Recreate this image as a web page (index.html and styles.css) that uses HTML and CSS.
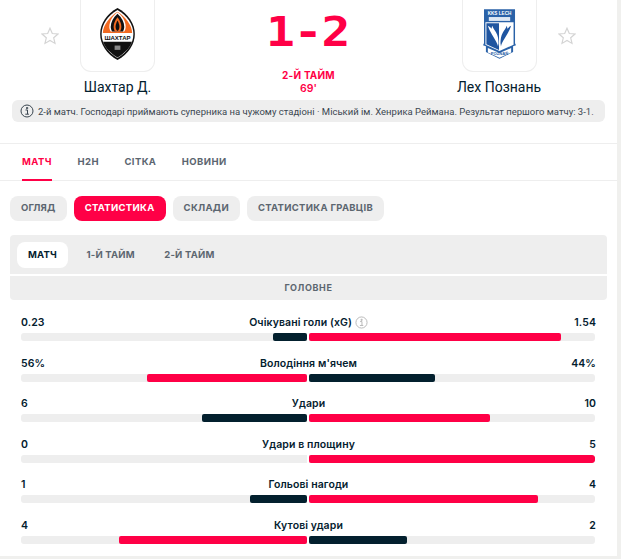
FILE: index.html
```html
<!DOCTYPE html>
<html lang="uk">
<head>
<meta charset="utf-8">
<title>Шахтар Д. - Лех Познань</title>
<link rel="stylesheet" href="styles.css">
</head>
<body>
<main class="panel">
  <header class="match">
    <div class="side side-home">
      <svg class="star" viewBox="0 0 18 18"><path d="M9 1.200l2.300 5.300 5.700.5-4.300 3.800 1.300 5.600L9 13.500l-5 2.900 1.300-5.600L1 7l5.700-.5z"/></svg>
      <div class="team">
        <div class="logo">
          <svg class="crest" viewBox="0 0 36 54">
            <path d="M18 0C7 6 0 16 0 27s7 21 18 27c11-6 18-16 18-27S29 6 18 0z" fill="#111"/>
            <path d="M18 2C8 8 1.500 17 1.500 27s6.500 19 16.500 25c10-6 16.500-15 16.500-25S28 8 18 2z" fill="#fff"/>
            <path d="M18 4C9.500 9.500 3 18 2.800 26h30.400C33 18 26.500 9.500 18 4z" fill="#f26a21"/>
            <path d="M18 4.500c-5.500 4-8.500 10-8.500 15 0 2 .5 3.500 1.500 5h14c1-1.500 1.500-3 1.500-5 0-5-3-11-8.500-15z" fill="#fff"/>
            <path d="M18 6c-4.500 4-7 9-7 13.500 0 2 .5 3.500 1.500 5h11c1-1.500 1.500-3 1.500-5C25 15 22.500 10 18 6z" fill="#111"/>
            <path d="M18 9.500c-2.500 3-4 6.500-4 10 0 2 .5 3.500 1.500 5h5c1-1.500 1.500-3 1.500-5 0-3.500-1.500-7-4-10z" fill="#f26a21"/>
            <path d="M18 13c-1.200 2-2 4.500-2 6.500 0 2 .7 3.500 2 4.500 1.300-1 2-2.500 2-4.500 0-2-.8-4.500-2-6.500z" fill="#111"/>
            <path d="M3 26.500h30v8H3z" fill="#fff"/>
            <path d="M3 35h30c-2 6.500-8 12-15 16.500C11 47 5 41.500 3 35z" fill="#111"/>
            <rect x="15" y="39" width="6" height="4.500" fill="#888"/>
            <text class="crest-text" x="18" y="33.300" text-anchor="middle">ШАХТАР</text>
          </svg>
        </div>
        <div class="team-name">Шахтар Д.</div>
      </div>
    </div>
    <div class="score-box">
      <div class="score">1-2</div>
      <div class="period">2-Й ТАЙМ</div>
      <div class="minute">69'</div>
    </div>
    <div class="side side-away">
      <div class="team">
        <div class="logo">
          <svg class="shield" viewBox="0 0 34 52">
            <path d="M1 0h32v35l1 2-3 1v6l-14 7-14-7v-6l-3-1 1-2z" fill="#2a62a8"/>
            <path d="M2.500 13.500h29v23L17 43 2.500 36.500z" fill="#fff"/>
            <path d="M3.500 14.500h13V42L3.500 36z" fill="#1f55a0"/>
            <rect x="6" y="8" width="22" height="4" fill="#dfe8f3"/>
            <path d="M15.500 38C14 32 8 26 5 17c2 1 3 2 4 3 0-1 0-2 .5-3 1 3 3 5 4 7 2 3 2.500 8 2.500 11z" fill="#fff"/>
            <path d="M18.500 38c1.500-6 7.500-12 10.500-21-2 1-3 2-4 3 0-1 0-2-.5-3-1 3-3 5-4 7-2 3-2.500 8-2.500 11z" fill="#1f55a0"/>
            <path d="M5 40l12 5 12-5v4.500L17 50 5 44.500z" fill="#fff"/>
            <text class="shield-top" x="17" y="6" text-anchor="middle">KKS LECH</text>
            <text class="shield-bottom" x="17" y="47.300" text-anchor="middle">POZNAŃ</text>
          </svg>
        </div>
        <div class="team-name">Лех Познань</div>
      </div>
      <svg class="star" viewBox="0 0 18 18"><path d="M9 1.200l2.300 5.300 5.700.5-4.300 3.800 1.300 5.600L9 13.500l-5 2.900 1.300-5.600L1 7l5.700-.5z"/></svg>
    </div>
  </header>

  <div class="notice">
    <svg class="info info-dark" viewBox="0 0 14 14"><circle cx="7" cy="7" r="6"/><path d="M5.500 6h2v4M5.300 10.200h3.600M6.500 3.500h1.200v1.200H6.500z"/></svg>
    <span>2-й матч. Господарі приймають суперника на чужому стадіоні · Міський ім. Хенрика Реймана. Результат першого матчу: 3-1.</span>
  </div>

  <nav class="tabs">
    <a class="tab tab-active">МАТЧ</a>
    <a class="tab">H2H</a>
    <a class="tab">СІТКА</a>
    <a class="tab">НОВИНИ</a>
  </nav>

  <div class="pills">
    <a class="pill">ОГЛЯД</a>
    <a class="pill pill-active">СТАТИСТИКА</a>
    <a class="pill">СКЛАДИ</a>
    <a class="pill">СТАТИСТИКА ГРАВЦІВ</a>
  </div>

  <div class="periods">
    <a class="period-tab period-tab-active">МАТЧ</a>
    <a class="period-tab">1-Й ТАЙМ</a>
    <a class="period-tab">2-Й ТАЙМ</a>
  </div>
  <div class="section-head">ГОЛОВНЕ</div>

  <section class="stats">
    <div class="stat">
      <div class="stat-text"><span>0.23</span><span class="stat-label">Очікувані голи (xG) <svg class="info info-light" viewBox="0 0 14 14"><circle cx="7" cy="7" r="6"/><path d="M5.500 6h2v4M5.300 10.200h3.600M6.500 3.500h1.200v1.200H6.500z"/></svg></span><span class="stat-right">1.54</span></div>
      <div class="bars"><div class="track track-left"><div class="fill fill-navy" style="width:12%"></div></div><div class="track"><div class="fill fill-red" style="width:88%"></div></div></div>
    </div>
    <div class="stat">
      <div class="stat-text"><span>56%</span><span class="stat-label">Володіння м'ячем</span><span class="stat-right">44%</span></div>
      <div class="bars"><div class="track track-left"><div class="fill fill-red" style="width:56%"></div></div><div class="track"><div class="fill fill-navy" style="width:44%"></div></div></div>
    </div>
    <div class="stat">
      <div class="stat-text"><span>6</span><span class="stat-label">Удари</span><span class="stat-right">10</span></div>
      <div class="bars"><div class="track track-left"><div class="fill fill-navy" style="width:36.700%"></div></div><div class="track"><div class="fill fill-red" style="width:63.300%"></div></div></div>
    </div>
    <div class="stat">
      <div class="stat-text"><span>0</span><span class="stat-label">Удари в площину</span><span class="stat-right">5</span></div>
      <div class="bars"><div class="track track-left"></div><div class="track"><div class="fill fill-red" style="width:100%"></div></div></div>
    </div>
    <div class="stat">
      <div class="stat-text"><span>1</span><span class="stat-label">Гольові нагоди</span><span class="stat-right">4</span></div>
      <div class="bars"><div class="track track-left"><div class="fill fill-navy" style="width:20%"></div></div><div class="track"><div class="fill fill-red" style="width:80%"></div></div></div>
    </div>
    <div class="stat">
      <div class="stat-text"><span>4</span><span class="stat-label">Кутові удари</span><span class="stat-right">2</span></div>
      <div class="bars"><div class="track track-left"><div class="fill fill-red" style="width:65.700%"></div></div><div class="track"><div class="fill fill-navy" style="width:34.300%"></div></div></div>
    </div>
  </section>
</main>
</body>
</html>
```
FILE: styles.css
```css
* { box-sizing: border-box; }
html, body { margin: 0; height: 559px; overflow: hidden; background: #f0f0ee; }
body { font-family: Inter, "Liberation Sans", sans-serif; color: #03202e; }
.panel { width: 617px; height: 556px; background: #fff; overflow: hidden; }

.match { height: 100px; display: grid; grid-template-columns: 1fr 136px 1fr; }
.side { display: flex; align-items: flex-start; }
.side-home { padding-left: 41px; gap: 21px; }
.side-away { padding-left: 85px; gap: 21px; }
.star { width: 18px; height: 18px; margin-top: 27px; fill: #fff; stroke: #d4d4d4; stroke-width: 1.2; flex: none; }
.team { width: 75px; display: flex; flex-direction: column; align-items: center; }
.logo { width: 75px; height: 72px; border: 1px solid #eee; border-top: 0; border-radius: 0 0 11px 11px; display: flex; justify-content: center; align-items: flex-start; }
.crest { width: 35px; height: 52px; margin-top: 8px; }
.crest-text { font: 700 6.300px "Liberation Sans", sans-serif; fill: #111; }
.shield { width: 33px; height: 51px; margin-top: 9px; }
.shield-top { font: 700 4.800px "Liberation Sans", sans-serif; fill: #fff; }
.shield-bottom { font: 700 4.300px "Liberation Sans", sans-serif; fill: #2a62a8; }
.team-name { margin-top: 6px; font-family: Roboto, sans-serif; font-size: 14px; line-height: 18px; white-space: nowrap; }

.score-box { display: flex; flex-direction: column; align-items: center; color: #ff0046; }
.score { font: 700 40px/36px "DejaVu Sans Mono", monospace; margin-top: 14px; height: 53px; letter-spacing: -1px; transform: translateX(-1px) scaleX(1.2); }
.period { font-size: 10px; line-height: 14px; font-weight: 700; letter-spacing: .2px; margin-top: 1px; }
.minute { font-size: 10.500px; line-height: 14px; font-weight: 600; }

.notice { margin: 0 12px; width: 593px; height: 22px; border-radius: 6px; background: #eee; display: flex; align-items: center; gap: 4px; padding-left: 8px; font-family: Roboto, sans-serif; font-size: 9.500px; color: #3a4650; white-space: nowrap; }
.info { fill: none; flex: none; }
.info-dark { width: 14px; height: 14px; stroke: #3a4650; stroke-width: 1; }
.info-light { width: 13px; height: 13px; stroke: #b5b5b5; stroke-width: 1; vertical-align: -3px; }

.tabs { margin-top: 21px; height: 38px; border-top: 1px solid #eee; border-bottom: 1px solid #eee; display: flex; gap: 25.500px; padding-left: 22px; }
.tab { font-size: 9.500px; font-weight: 700; letter-spacing: .4px; line-height: 35px; color: #5c6670; height: 37px; }
.tab-active { color: #ff0046; border-bottom: 2px solid #ff0046; width: 30px; white-space: nowrap; }

.pills { display: flex; gap: 7px; margin: 15px 0 14px 10px; }
.pill { height: 25px; line-height: 23px; padding: 0 11px; border-radius: 8px; background: #eee; font-size: 9.500px; font-weight: 700; letter-spacing: .3px; color: #5c6670; white-space: nowrap; }
.pill-active { background: #ff0046; color: #fff; }

.periods { margin-left: 10px; width: 597px; height: 39px; background: #eee; border-radius: 4px 4px 0 0; padding: 7px; display: flex; }
.period-tab { height: 26px; line-height: 25px; padding: 0 11px; margin-right: 7.500px; font-size: 9.500px; font-weight: 700; letter-spacing: .2px; color: #5c6670; border-radius: 8px; white-space: nowrap; }
.period-tab-active { background: #fff; color: #03202e; }

.section-head { margin: 2px 0 0 10px; width: 597px; height: 24px; background: #eee; border-radius: 0 0 4px 4px; text-align: center; font-size: 9px; line-height: 23px; font-weight: 700; letter-spacing: .6px; color: #5c6670; }

.stats { padding: 14px 21px 0; display: grid; grid-auto-rows: 40.500px; }
.stat-text { display: grid; grid-template-columns: 1fr auto 1fr; font-size: 10.500px; line-height: 18px; height: 19px; font-weight: 600; letter-spacing: .1px; }
.stat-label { text-align: center; }
.stat-right { text-align: right; }
.bars { display: grid; grid-template-columns: 286px 286px; gap: 2px; }
.track { height: 8px; background: #eee; border-radius: 0 3px 3px 0; overflow: hidden; display: flex; }
.track-left { justify-content: flex-end; border-radius: 3px 0 0 3px; }
.fill { height: 8px; border-radius: 2px; }
.fill-red { background: #ff0046; }
.fill-navy { background: #03202e; }
```
